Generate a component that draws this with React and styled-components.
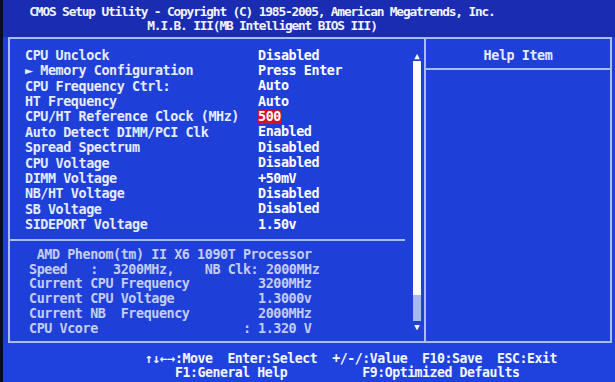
import React from 'react';
import styled, { createGlobalStyle } from 'styled-components';

const GlobalStyle = createGlobalStyle`
  html, body { margin: 0; padding: 0; background: #000; }
  body { font-family: "DejaVu Sans Mono", "Liberation Mono", monospace; }
`;

const Screen = styled.div`
  width: 615px;
  height: 382px;
  box-sizing: border-box;
  background: #1f40d8;
  border-left: 3px solid #080c2a;
  display: flex;
  flex-direction: column;
  color: #fff;
  font-weight: bold;
  font-size: 13.4px;
  letter-spacing: -0.42px;
  overflow: hidden;
  white-space: pre;
`;

const Header = styled.header`
  height: 37px;
  flex: none;
  box-sizing: border-box;
  padding-top: 5px;
  background: #1a2cb2;
`;

const Title = styled.div`
  width: 518px;
  text-align: center;
  font-size: 12.8px;
  letter-spacing: -1.15px;
  line-height: 14px;
  color: #f2f4ff;
`;

const Frame = styled.main`
  height: 306px;
  flex: none;
  box-sizing: border-box;
  margin: 0 3px 0 5px;
  border: 2px solid #a9bdf0;
  display: grid;
  grid-template-columns: 416px 1fr;
`;

const SetupPanel = styled.section`
  display: flex;
  border-right: 2px solid #a9bdf0;
`;

const Items = styled.div`
  flex: 1;
  padding-top: 9px;
`;

const Row = styled.div`
  display: grid;
  grid-template-columns: 233px 1fr;
  height: 15.36px;
  line-height: 15.36px;
  padding-left: 15px;
  color: #e6ebff;
`;

const Value = styled.span`
  justify-self: start;
  color: #ffffff;
  background: ${p => (p.$active ? '#d3112c' : 'transparent')};
  line-height: 14px;
  align-self: center;
`;

const Divider = styled.div`
  height: 15.36px;
  display: flex;
  align-items: center;
  margin-right: 7px;
  &::after {
    content: '';
    flex: 1;
    height: 2px;
    background: #a9bdf0;
  }
`;

const InfoRow = styled.div`
  display: grid;
  grid-template-columns: 214px 15px 1fr;
  height: 14.9px;
  line-height: 14.9px;
  padding-left: 19px;
  color: #c3cdf2;
`;

const InfoLine = styled.div`
  height: 14.9px;
  line-height: 14.9px;
  padding-left: 19px;
  color: #c3cdf2;
`;

const Scroll = styled.div`
  width: 10px;
  margin-right: 2px;
  padding-top: 12px;
  display: flex;
  flex-direction: column;
  align-items: center;
`;

const Arrow = styled.div`
  height: ${p => p.$h}px;
  line-height: ${p => p.$h}px;
  font-size: 9px;
  letter-spacing: 0;
  color: #ffffff;
`;

const Track = styled.div`
  width: 8px;
  height: 260px;
  background: linear-gradient(#ffffff 0 234px, #a6b8ec 234px);
`;

const HelpPanel = styled.aside`
  display: flex;
  flex-direction: column;
`;

const HelpTitle = styled.div`
  height: 31px;
  box-sizing: border-box;
  padding-top: 10px;
  line-height: 14px;
  text-align: center;
  border-bottom: 2px solid #a9bdf0;
  color: #e6ebff;
`;

const Footer = styled.footer`
  flex: 1;
  padding: 9px 0 0 142px;
  font-size: 13.2px;
  letter-spacing: -0.45px;
  line-height: 14px;
  background: #1f42de;
  color: #f4f6ff;
`;

const settings = [
  ['CPU Unclock', 'Disabled'],
  ['\u25BA Memory Configuration', 'Press Enter'],
  ['CPU Frequency Ctrl:', 'Auto'],
  ['HT Frequency', 'Auto'],
  ['CPU/HT Reference Clock (MHz)', '500', true],
  ['Auto Detect DIMM/PCI Clk', 'Enabled'],
  ['Spread Spectrum', 'Disabled'],
  ['CPU Voltage', 'Disabled'],
  ['DIMM Voltage', '+50mV'],
  ['NB/HT Voltage', 'Disabled'],
  ['SB Voltage', 'Disabled'],
  ['SIDEPORT Voltage', '1.50v'],
];

const info = [
  ['Current CPU Frequency', '', '3200MHz'],
  ['Current CPU Voltage', '', '1.3000v'],
  ['Current NB  Frequency', '', '2000MHz'],
  ['CPU Vcore', ':', '1.320 V'],
];

export default function App() {
  return (
    <>
      <GlobalStyle />
      <Screen>
        <Header>
          <Title>CMOS Setup Utility - Copyright (C) 1985-2005, American Megatrends, Inc.</Title>
          <Title>M.I.B. III(MB Intelligent BIOS III)</Title>
        </Header>
        <Frame>
          <SetupPanel>
            <Items>
              {settings.map(([label, value, active]) => (
                <Row key={label}>
                  <span>{label}</span>
                  <Value $active={active}>{value}</Value>
                </Row>
              ))}
              <Divider />
              <InfoLine> AMD Phenom(tm) II X6 1090T Processor</InfoLine>
              <InfoLine>{'Speed   :  3200MHz,    NB Clk: 2000MHz'}</InfoLine>
              {info.map(([label, sep, value]) => (
                <InfoRow key={label}>
                  <span>{label}</span>
                  <span>{sep}</span>
                  <span>{value}</span>
                </InfoRow>
              ))}
            </Items>
            <Scroll>
              <Arrow $h={10}>▲</Arrow>
              <Track />
              <Arrow $h={13}>▼</Arrow>
            </Scroll>
          </SetupPanel>
          <HelpPanel>
            <HelpTitle>Help Item</HelpTitle>
          </HelpPanel>
        </Frame>
        <Footer>
          <div>{'\u2191\u2193\u2190\u2192:Move  Enter:Select  +/-/:Value  F10:Save  ESC:Exit'}</div>
          <div>{'    F1:General Help          F9:Optimized Defaults'}</div>
        </Footer>
      </Screen>
    </>
  );
}
